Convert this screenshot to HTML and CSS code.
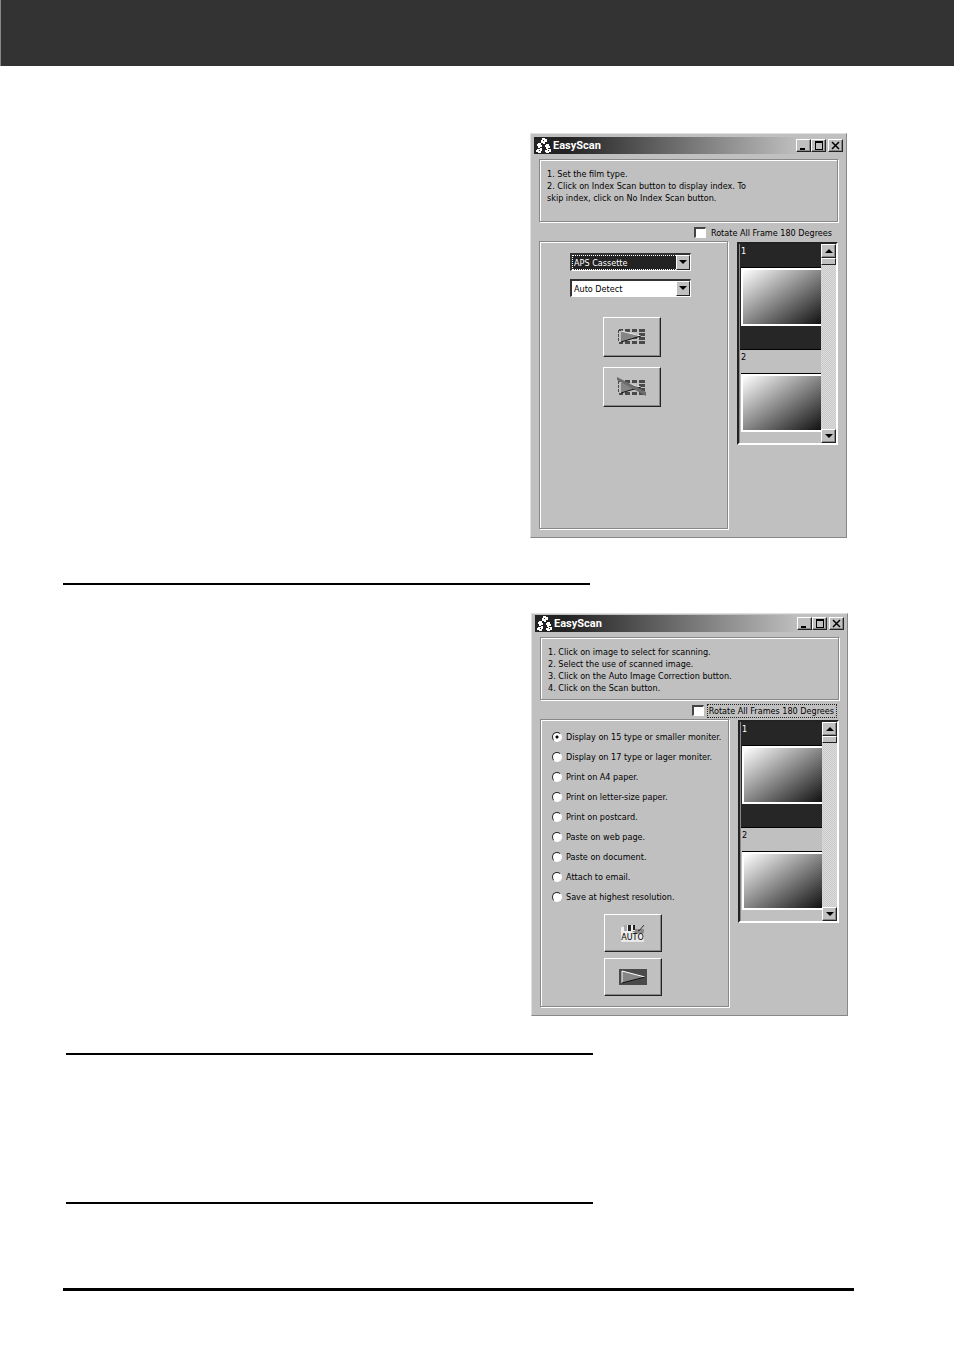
FILE: index.html
```html
<!DOCTYPE html>
<html lang="en">
<head>
<meta charset="UTF-8">
<meta name="viewport" content="width=device-width, initial-scale=1">
<title>EasyScan</title>
<link rel="stylesheet" href="styles.css">
</head>
<body>

<!-- shared icons -->
<svg class="symbols" aria-hidden="true">
	<symbol id="logo" viewBox="0 0 16 16">
		<path fill="#fff" d="M6 0h3v1h2v3H9v2H7V5H5V2h1zM2 5h3v2h1v2H4v1H2V8H1V6h1zM10 6h3v2h1v2h-2v1h-2V9H9V7h1zM1 11h3v-1h2v3H5v2H2v-1H0v-2h1zM9 12h2v-1h4v3h-2v1h-3v-1H9z"/>
		<path fill="#222" d="M7 2h1v1H7zM3 12h1v1H3zM12 12h1v1h-1z"/>
	</symbol>
	<symbol id="film" viewBox="0 0 28 16">
		<path fill="#4a4a4a" d="M1 0h4v2H1zM7 0h5v3H7zM14 0h5v3h-5zM21 0h6v3h-6zM7 5h5v5H7zM14 5h5v5h-5zM21 4h6v3h-6zM21 8h6v3h-6zM1 13h4v2H1zM7 12h5v3H7zM14 12h5v3h-5zM21 12h6v3h-6zM0 1h1v3H0zM0 5h1v3H0zM0 9h1v3H0z"/>
		<path fill="#858585" d="M3 2l20 5L3 13z"/>
		<path fill="none" stroke="#eee" d="M3 2l20 5"/>
		<path fill="none" stroke="#111" d="M3 13l20-6"/>
	</symbol>
	<symbol id="min" viewBox="0 0 11 9"><path d="M2 7h5v2H2z"/></symbol>
	<symbol id="max" viewBox="0 0 11 9"><path fill-rule="evenodd" d="M2 0h8v9H2zM3 2v6h6V2z"/></symbol>
	<symbol id="close" viewBox="0 0 11 9"><path fill="none" stroke="#000" stroke-width="1.500" d="M2 1l7 7M9 1L2 8"/></symbol>
</svg>

<header class="page-head"></header>

<main class="page">

	<!-- film type window -->
	<form class="window">
		<div class="title">
			<svg class="logo" aria-hidden="true"><use href="#logo"/></svg>
			<h2>EasyScan</h2>
			<button type="button" aria-label="Minimize"><svg><use href="#min"/></svg></button>
			<button type="button" aria-label="Maximize"><svg><use href="#max"/></svg></button>
			<button type="button" class="close" aria-label="Close"><svg><use href="#close"/></svg></button>
		</div>
		<div class="body">
			<div class="steps etched">
				<p>1. Set the film type.</p>
				<p>2. Click on Index Scan button to display index. To<br>skip index, click on No Index Scan button.</p>
			</div>
			<div class="rotate">
				<input type="checkbox" id="rotate1">
				<label for="rotate1">Rotate All Frame 180 Degrees</label>
			</div>
			<div class="columns">
				<div class="panel etched">
					<div class="combos">
						<div class="combo focused">
							<select aria-label="Film"><option>APS Cassette</option></select>
							<span class="arrow"></span>
						</div>
						<div class="combo">
							<select aria-label="Film type"><option>Auto Detect</option></select>
							<span class="arrow"></span>
						</div>
					</div>
					<div class="actions">
						<button type="button" class="action" aria-label="Index Scan">
							<svg width="28" height="16"><use href="#film"/></svg>
						</button>
						<button type="button" class="action" aria-label="No Index Scan">
							<svg width="30" height="20" viewBox="0 0 30 20">
								<use href="#film" x="1" y="3" width="28" height="16"/>
								<path fill="#6c6c6c" d="M0 0l29 15v4L0 3z"/>
							</svg>
						</button>
					</div>
				</div>
				<div class="frames">
					<ul>
						<li class="picked"><span>1</span><div class="photo"></div></li>
						<li><span>2</span><div class="photo"></div></li>
					</ul>
					<div class="scroll">
						<button type="button" class="up" aria-label="Scroll up"></button>
						<div class="thumb"></div>
						<button type="button" class="down" aria-label="Scroll down"></button>
					</div>
				</div>
			</div>
		</div>
	</form>

	<hr class="rule first">

	<!-- scan window -->
	<form class="window scan">
		<div class="title">
			<svg class="logo" aria-hidden="true"><use href="#logo"/></svg>
			<h2>EasyScan</h2>
			<button type="button" aria-label="Minimize"><svg><use href="#min"/></svg></button>
			<button type="button" aria-label="Maximize"><svg><use href="#max"/></svg></button>
			<button type="button" class="close" aria-label="Close"><svg><use href="#close"/></svg></button>
		</div>
		<div class="body">
			<div class="steps etched">
				<p>1. Click on image to select for scanning.</p>
				<p>2. Select the use of scanned image.</p>
				<p>3. Click on the Auto Image Correction button.</p>
				<p>4. Click on the Scan button.</p>
			</div>
			<div class="rotate">
				<input type="checkbox" id="rotate2">
				<label for="rotate2" class="dotted">Rotate All Frames 180 Degrees</label>
			</div>
			<div class="columns">
				<div class="panel etched">
					<div class="uses">
						<label><input type="radio" name="use" checked>Display on 15 type or smaller moniter.</label>
						<label><input type="radio" name="use">Display on 17 type or lager moniter.</label>
						<label><input type="radio" name="use">Print on A4 paper.</label>
						<label><input type="radio" name="use">Print on letter-size paper.</label>
						<label><input type="radio" name="use">Print on postcard.</label>
						<label><input type="radio" name="use">Paste on web page.</label>
						<label><input type="radio" name="use">Paste on document.</label>
						<label><input type="radio" name="use">Attach to email.</label>
						<label><input type="radio" name="use">Save at highest resolution.</label>
					</div>
					<div class="actions">
						<button type="button" class="action auto">
							<svg width="24" height="9" viewBox="0 0 24 9" aria-hidden="true">
								<path fill="#eee" d="M0 2h3V0h11v9H0z"/>
								<path fill="#aaa" d="M3 0h3v6H3z"/>
								<path fill="#222" d="M7 0h3v6H7zM12 0h2v5h-2z"/>
								<path fill="#8a8a8a" d="M11 6h3V4h9v4h-9z"/>
								<path fill="none" stroke="#333" d="M17 5l1 1 5-6"/>
							</svg>
							<span>AUTO</span>
						</button>
						<button type="button" class="action" aria-label="Scan">
							<svg width="28" height="16" viewBox="0 0 28 16">
								<path fill="#4a4a4a" d="M0 0h28v16H0z"/>
								<path fill="#858585" d="M3 2l23 6-23 6z"/>
								<path fill="none" stroke="#fff" d="M3 14V2l23 6"/>
								<path fill="none" stroke="#111" d="M3 14l23-6"/>
							</svg>
						</button>
					</div>
				</div>
				<div class="frames">
					<ul>
						<li class="picked"><span>1</span><div class="photo"></div></li>
						<li><span>2</span><div class="photo"></div></li>
					</ul>
					<div class="scroll">
						<button type="button" class="up" aria-label="Scroll up"></button>
						<div class="thumb"></div>
						<button type="button" class="down" aria-label="Scroll down"></button>
					</div>
				</div>
			</div>
		</div>
	</form>

	<hr class="rule second">
	<hr class="rule third">
	<hr class="rule last">
</main>

</body>
</html>
```

FILE: styles.css
```css
* {
	box-sizing: border-box;
}

body, h2, p, ul, li, hr, input, button {
	margin: 0;
	padding: 0;
}

body {
	background: #fff;
	color: #000;
	font: 9px/12px "DejaVu Sans Condensed", Inter, "Liberation Sans", sans-serif;
}

.symbols {
	position: absolute;
	width: 0;
	height: 0;
}

.page-head {
	height: 66px;
	background: #333;
	border-left: 1px solid #888;
}

.page {
	display: flex;
	flex-direction: column;
	padding: 67px 100px 60px 63px;
}

/* rules between the sections */
.rule {
	width: 66.6%;
	border: 0;
	border-top: 2px solid #000;
}

.first {
	margin: 45px 0 28px;
}

.second {
	margin: 37px 0 0 3px;
}

.third {
	margin: 147px 0 0 3px;
}

.last {
	width: 100%;
	margin-top: 84px;
	border-top-width: 3px;
}

/* window */
.window {
	align-self: flex-end;
	width: 40%;
	min-width: 317px;
	margin-right: 7px;
	padding: 3px;
	background: #c0c0c0;
	border: 1px solid #888;
	border-top-color: #e0e0e0;
	border-left-color: #e0e0e0;
}

.scan {
	margin-right: 6px;
	padding-top: 1px;
}

.title {
	display: flex;
	align-items: center;
	height: 17px;
	padding-left: 2px;
	background: linear-gradient(to right, #222 10%, #c0c0c0 86%);
}

.logo {
	width: 16px;
	height: 16px;
}

.title h2 {
	flex: 1;
	padding-left: 1px;
	color: #fff;
	font: bold 11px/16px Roboto, "Liberation Sans", sans-serif;
}

button {
	background: #c0c0c0;
	border: 1px solid #222;
	border-top-color: #fff;
	border-left-color: #fff;
	box-shadow: inset -1px -1px #888;
	font: inherit;
	color: inherit;
}

.title button {
	display: flex;
	width: 15px;
	height: 13px;
	padding: 1px;
}

.title button svg {
	width: 11px;
	height: 9px;
}

.title .close {
	margin-left: 2px;
}

.body {
	padding: 5px;
}

.etched {
	border: 1px solid #888;
	box-shadow: inset 1px 1px #fff, 1px 1px #fff;
}

.steps {
	min-height: 63px;
	padding: 8px 7px 5px;
}

.rotate {
	display: flex;
	align-items: center;
	justify-content: flex-end;
	gap: 4px;
	height: 15px;
	margin: 3px 0 1px;
}

.rotate input {
	appearance: none;
	width: 12px;
	height: 11px;
	background: #fff;
	border: 1px solid #fff;
	border-top: 2px solid #444;
	border-left: 2px solid #444;
}

.rotate label {
	padding: 0 6px 0 1px;
}

.rotate .dotted {
	margin-right: 3px;
	padding-right: 2px;
	outline: 1px dotted #222;
}

.columns {
	display: flex;
	align-items: flex-start;
	gap: 9px;
}

.panel {
	flex: 1;
	min-width: 0;
	min-height: 288px;
}

/* drop-downs */
.combos {
	display: grid;
	gap: 8px;
	margin: 11px 36px 20px 30px;
}

.combo {
	position: relative;
	height: 18px;
	background: #fff;
	border: 1px solid #fff;
	border-top: 2px solid #333;
	border-left: 2px solid #333;
}

.combo select {
	appearance: none;
	display: block;
	width: 100%;
	height: 15px;
	margin: 0;
	padding: 0 16px 0 2px;
	background: #fff;
	border: 0;
	border-radius: 0;
	color: #000;
	font: inherit;
}

.focused select {
	background: #222;
	color: #fff;
	outline: 1px dotted #fff;
	outline-offset: -1px;
}

.arrow {
	position: absolute;
	top: 0;
	right: 0;
	width: 14px;
	height: 15px;
	background: #c0c0c0;
	border: 1px solid #222;
	border-top-color: #fff;
	border-left-color: #fff;
	pointer-events: none;
}

.arrow::after, .scroll button::after {
	content: "";
	display: block;
	width: 0;
	margin: 4px auto 0;
	border: 4px solid transparent;
	border-top-color: #000;
	border-bottom: 0;
}

/* big buttons */
.actions {
	display: flex;
	flex-direction: column;
	align-items: center;
	gap: 10px;
	padding-right: 4px;
}

.action {
	display: flex;
	flex-direction: column;
	align-items: center;
	justify-content: center;
	width: 58px;
	height: 40px;
}

.scan .actions {
	gap: 6px;
}

.scan .action {
	height: 38px;
}

.auto span {
	background: #e8e8e8;
	color: #000;
	font: 8px/8px "DejaVu Sans", sans-serif;
}

/* use of the scanned image */
.uses {
	padding: 7px 0 7px 11px;
}

.uses label {
	display: flex;
	align-items: center;
	height: 20px;
	white-space: nowrap;
}

.uses input {
	appearance: none;
	flex: none;
	width: 10px;
	height: 10px;
	margin-right: 4px;
	background: #fff;
	border: 1px solid #fff;
	border-top-color: #222;
	border-left-color: #222;
	border-radius: 50%;
}

.uses input:checked {
	background: radial-gradient(circle, #000 1px, #fff 2px);
}

/* frame list */
.frames {
	display: flex;
	width: 101px;
	height: 203px;
	margin-top: 1px;
	border: 2px solid #fff;
	border-top-color: #222;
	border-left-color: #222;
}

.frames ul {
	flex: 1;
	overflow: hidden;
	border-left: 1px solid #888;
	list-style: none;
}

.frames li {
	height: 106px;
	padding: 1px 0 0 1px;
	border-bottom: 1px solid #000;
}

.frames .picked {
	background: #262626;
	color: #fff;
}

.frames span {
	display: block;
	height: 23px;
}

.photo {
	height: 58px;
	border: 2px solid #fff;
	border-right: 0;
	background: linear-gradient(to bottom right, #fff, #888 50%, #111);
	box-shadow: 0 -1px #000;
}

.scroll {
	display: flex;
	flex-direction: column;
	width: 15px;
	background: repeating-conic-gradient(#ddd 0 25%, #c8c8c8 0 50%) 0 0/2px 2px;
}

.scroll button {
	height: 14px;
}

.scroll button::after {
	margin-top: 0;
}

.scroll .up::after {
	border: 4px solid transparent;
	border-bottom-color: #000;
	border-top: 0;
}

.thumb {
	height: 7px;
	background: #c0c0c0;
	border: 1px solid #222;
	border-top-color: #fff;
	border-left-color: #fff;
}

.scroll .down {
	margin-top: auto;
}
```
